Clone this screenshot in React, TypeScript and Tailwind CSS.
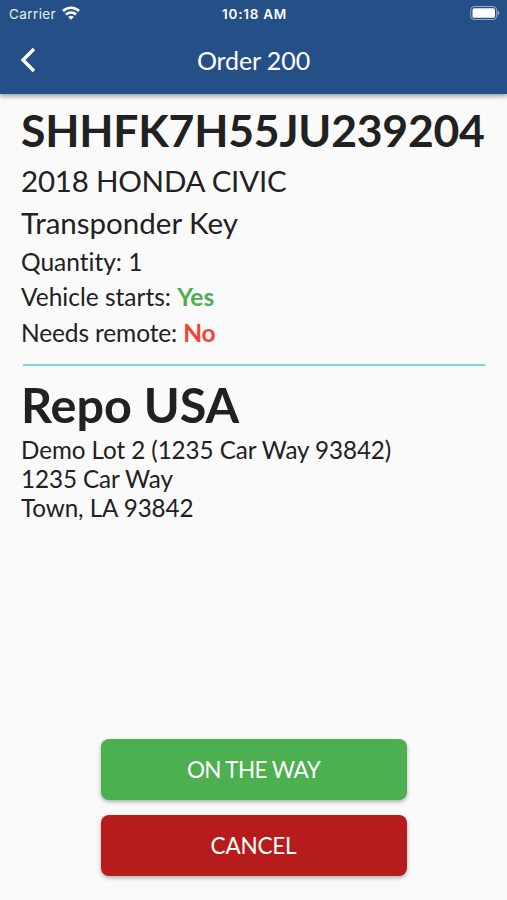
function StatusBar() {
  return (
    <div className="flex h-7 items-center justify-between pl-[9px] pr-[7px] font-['Inter',sans-serif] text-[13.5px] text-white">
      <div className="flex w-[120px] items-center gap-[6px]">
        <span className="tracking-[0.4px] text-white/90">Carrier</span>
        <svg width="18" height="14" viewBox="0 0 18 14" fill="none" stroke="currentColor" strokeWidth="2.7" className="-mt-[2px]">
          <path d="M1 5a11.5 11.5 0 0 1 16 0" />
          <path d="M4 8.5a7.2 7.2 0 0 1 10 0" />
          <path d="M9 13.8 6.2 11a4 4 0 0 1 5.6 0z" fill="currentColor" stroke="none" />
        </svg>
      </div>
      <span className="font-semibold tracking-[0.75px]">10:18 AM</span>
      <div className="flex w-[120px] justify-end">
        <svg width="30" height="14" viewBox="0 0 30 14" fill="none" className="-mt-[2px]">
          <rect x="0.7" y="0.5" width="26" height="13" rx="3.5" stroke="white" strokeOpacity="0.5" />
          <rect x="2.5" y="2.3" width="22.5" height="9.4" rx="1.5" fill="white" />
          <path d="M27.5 4.8v4.5c2.4-.6 2.4-3.9 0-4.5z" fill="white" fillOpacity="0.5" />
        </svg>
      </div>
    </div>
  );
}

function Header() {
  return (
    <header className="h-[94px] shrink-0 bg-[#254f87] text-white shadow-[0_2px_5px_rgba(0,0,0,0.4)]">
      <StatusBar />
      <div className="flex h-[64px] items-center px-[20px]">
        <button aria-label="Back" className="w-10">
          <svg width="16" height="26" viewBox="0 0 16 26" fill="none" stroke="currentColor" strokeWidth="3.4">
            <path d="M14 2 3 13l11 11" />
          </svg>
        </button>
        <h1 className="flex-1 pt-[2px] text-center text-[25px] tracking-[-0.1px]">Order 200</h1>
        <div className="w-10" />
      </div>
    </header>
  );
}

export default function App() {
  return (
    <div className="flex h-[900px] w-[507px] flex-col bg-[#fafafa] font-['Lato',sans-serif] text-[#212121] [font-variant-ligatures:none]">
      <Header />
      <main className="flex-1 px-[21px] pt-[8px]">
        <h2 className="whitespace-nowrap text-[44.5px] font-bold leading-[56px] tracking-[-0.22px]">
          SHHFK7H55JU239204
        </h2>
        <div className="pt-[2px] text-[29.5px] leading-[42px]">
          <p className="tracking-[-0.22px]">2018 HONDA CIVIC</p>
          <p>Transponder Key</p>
        </div>
        <div className="text-[24.5px] leading-[35.5px]">
          <p>Quantity: 1</p>
          <p className="-mt-px mb-px">
            Vehicle starts: <span className="font-bold text-[#4caf50]">Yes</span>
          </p>
          <p className="tracking-[-0.13px]">
            Needs remote: <span className="font-bold text-[#f44336]">No</span>
          </p>
        </div>
        <hr className="ml-[2px] mr-px mt-[13px] h-[2px] border-0 bg-[#77d6e3]" />
        <h2 className="mt-[8px] text-[48.5px] font-bold leading-[60px]">Repo USA</h2>
        <address className="pt-px text-[24.2px] not-italic leading-[29.3px] tracking-[-0.06px]">
          Demo Lot 2 (1235 Car Way 93842)
          <br />
          1235 Car Way
          <br />
          Town, LA 93842
        </address>
      </main>
      <div className="flex flex-col items-center gap-[15px] pb-[24px] text-[22.5px] text-white">
        <button className="h-[61px] w-[306px] rounded-[8px] bg-[#4caf50] tracking-[-0.6px] shadow-[0_2px_4px_rgba(0,0,0,0.3)]">
          ON THE WAY
        </button>
        <button className="h-[61px] w-[306px] rounded-[8px] bg-[#b71c1c] tracking-[-0.2px] shadow-[0_2px_4px_rgba(0,0,0,0.3)]">
          CANCEL
        </button>
      </div>
    </div>
  );
}
